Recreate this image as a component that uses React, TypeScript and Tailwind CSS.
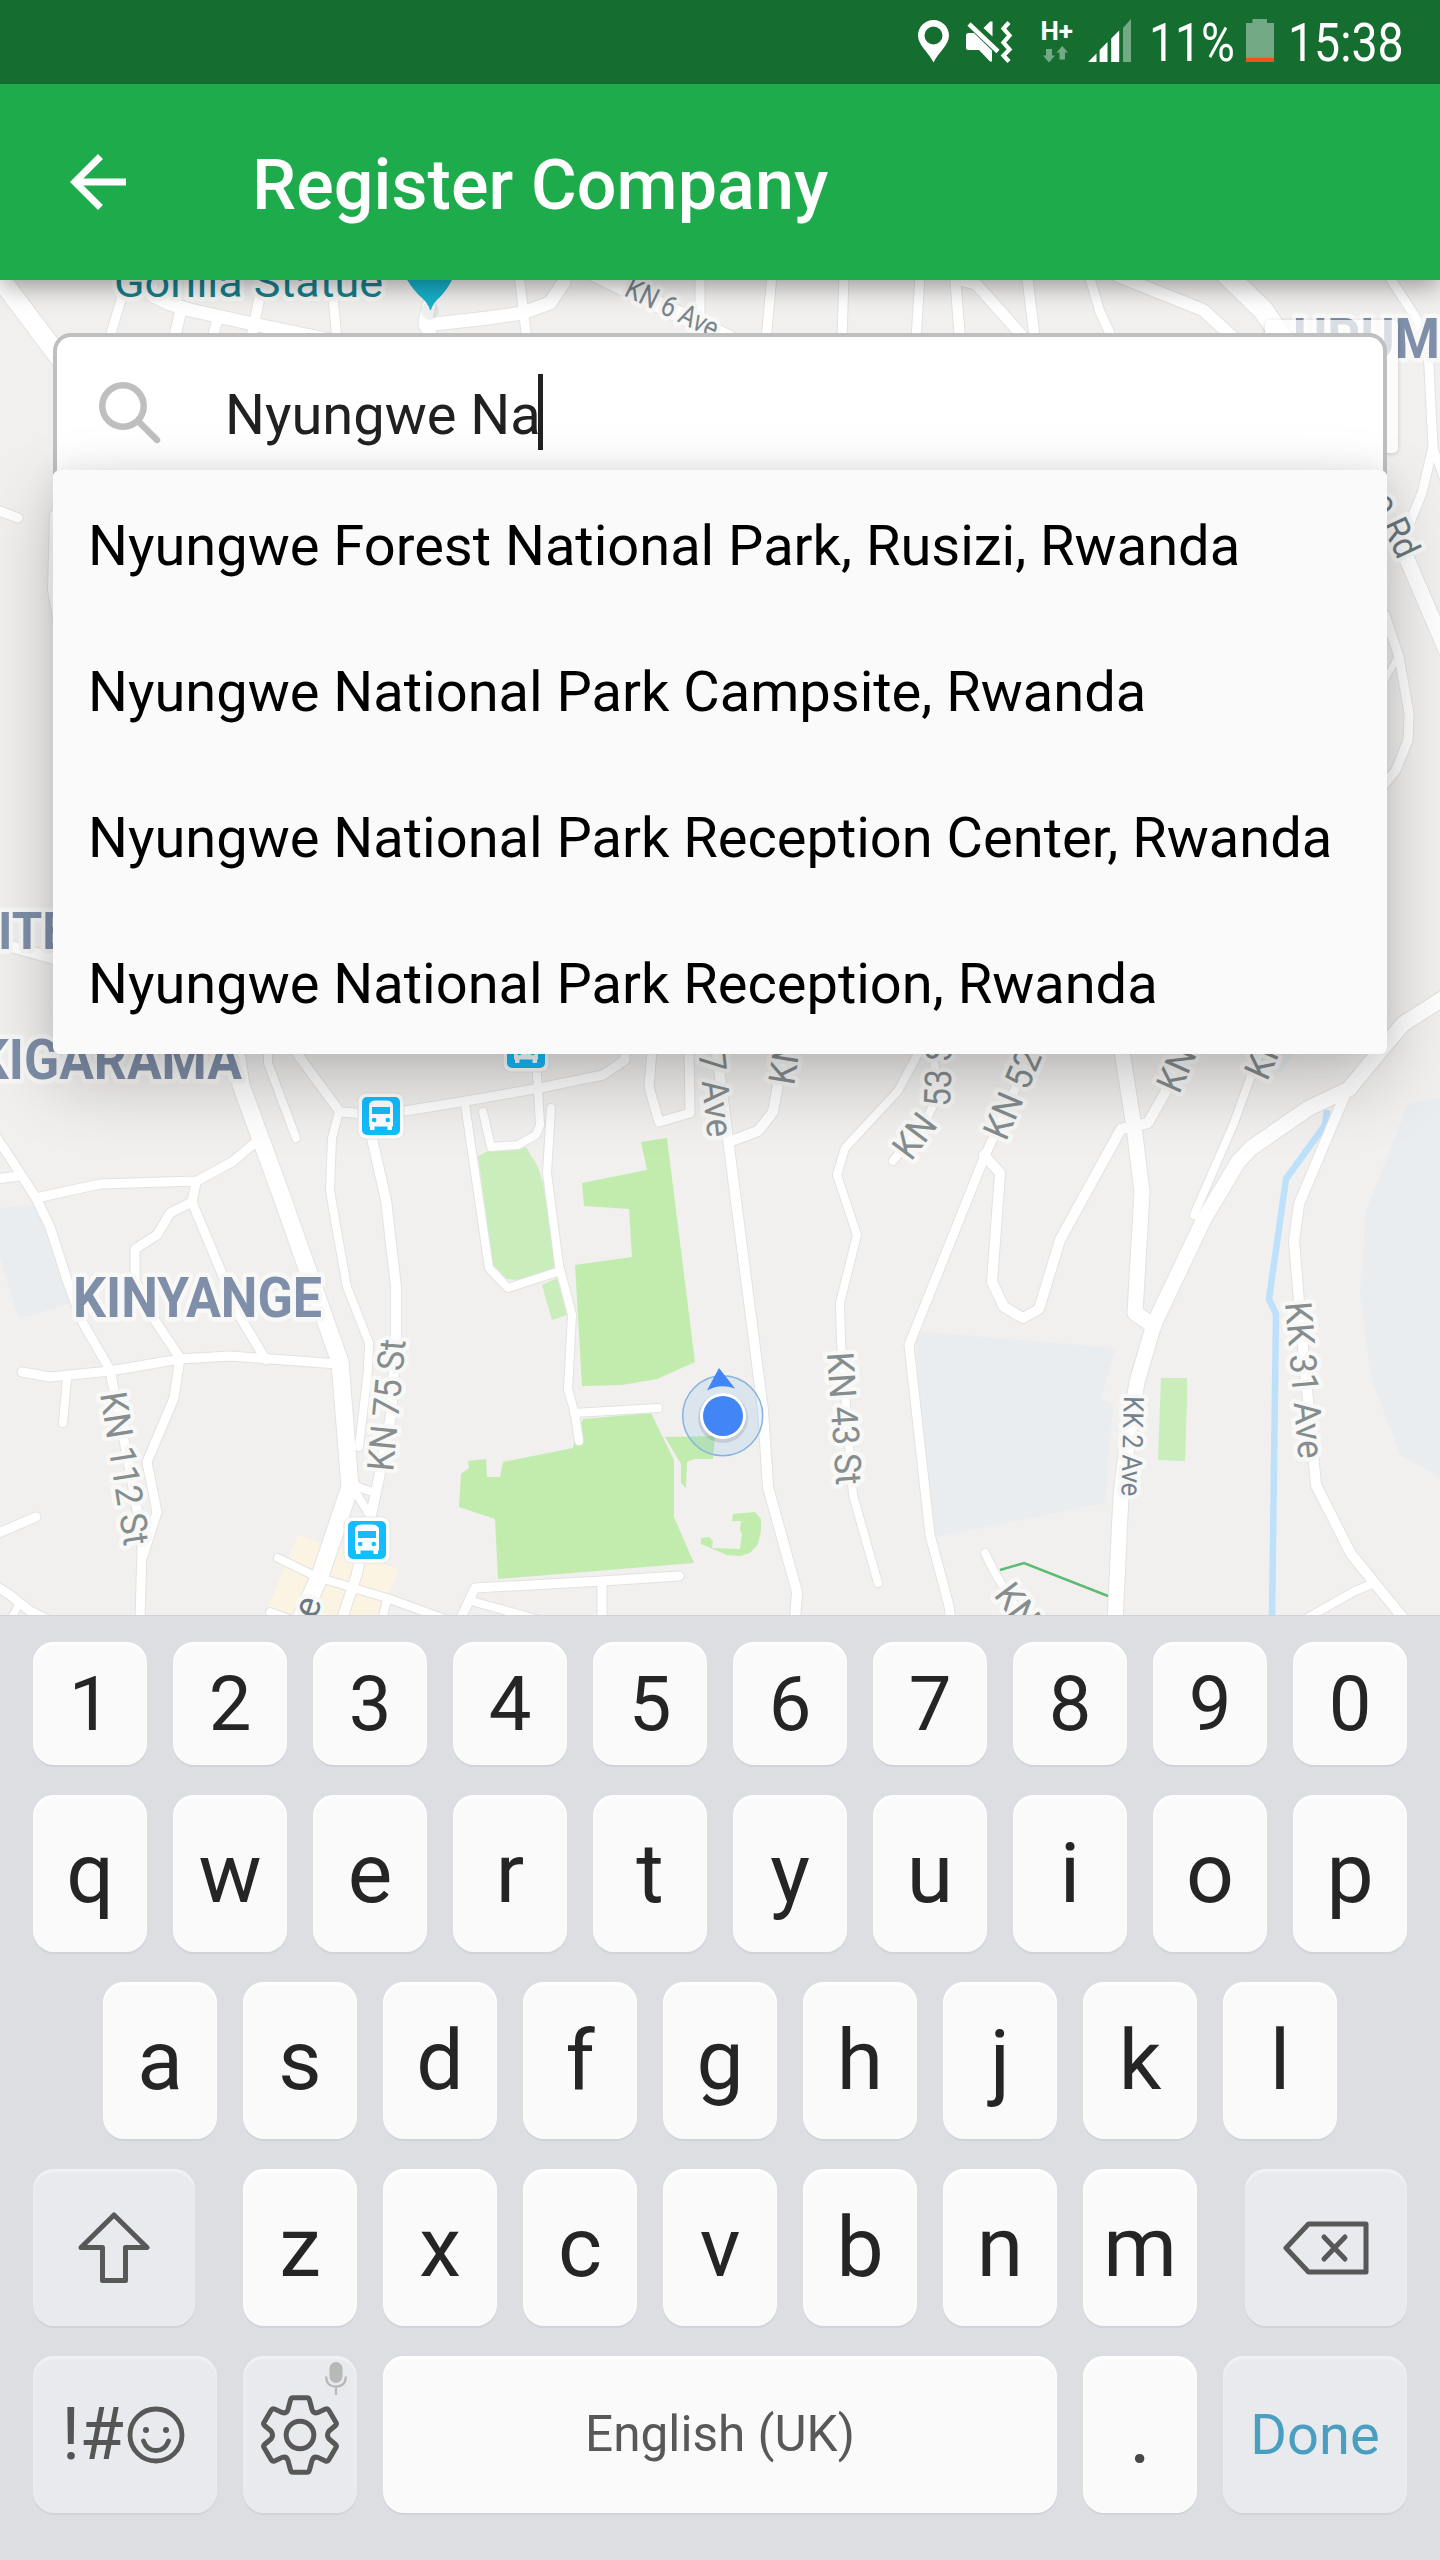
import type { ReactNode } from "react";

type Road = { d: string; w: number };

const roads: Road[] = [
  { d: "M-12 262L5 285L56 353L70 372", w: 19 },
  { d: "M127 280L109 340", w: 9 },
  { d: "M150 280L152 295L167 303L190 310L258 325L330 340", w: 13 },
  { d: "M181 310L174 340", w: 11 },
  { d: "M217 321L212 340", w: 10 },
  { d: "M264 275L251 340", w: 10 },
  { d: "M331 275L337 340", w: 9 },
  { d: "M429 305L425 322L432 340", w: 13 },
  { d: "M425 325L488 318L522 313L550 303L564 282L563 270", w: 13 },
  { d: "M519 275L527 340", w: 9 },
  { d: "M596 274L740 344", w: 16 },
  { d: "M700 275V322", w: 9 },
  { d: "M772 275L766 340", w: 9 },
  { d: "M844 275L842 340", w: 9 },
  { d: "M920 275L916 340", w: 9 },
  { d: "M955 275L960 340", w: 10 },
  { d: "M960 280L976 284L1026 340", w: 11 },
  { d: "M1027 275L1035 340", w: 10 },
  { d: "M1089 275L1100 312L1113 340", w: 9 },
  { d: "M1118 276L1203 310L1236 340", w: 12 },
  { d: "M1226 274L1263 310L1287 345", w: 20 },
  { d: "M1385 270L1416 318L1428 347L1433 447L1422 493L1404 537", w: 9 },
  { d: "M1433 447L1446 485", w: 8 },
  { d: "M1403 550L1446 650", w: 15 },
  { d: "M1385 615L1399 657L1409 713L1408 740L1396 770L1384 785", w: 9 },
  { d: "M1396 660L1385 680", w: 6 },
  { d: "M-8 508L18 518", w: 9 },
  { d: "M60 510L55 515L53 590L62 640", w: 10 },
  { d: "M-5 942L60 960", w: 11 },
  { d: "M234 1040L241 1085L260 1137L283 1200L340 1362L350 1487L321 1573L298 1625", w: 17 },
  { d: "M268 1050V1063L296 1138", w: 8 },
  { d: "M293 1048L340 1112L380 1115L466 1101L540 1088L603 1075L625 1060V1040", w: 9 },
  { d: "M339 1112L332 1138L330 1190L335 1220L347 1287L369 1343L368 1370L359 1447", w: 8 },
  { d: "M370 1130L386 1200L396 1287V1340L391 1415L380 1473L370 1520L356 1577L341 1622", w: 10 },
  { d: "M352 1482L360 1488L373 1492", w: 8 },
  { d: "M353 1488L369 1514", w: 8 },
  { d: "M-5 1135L20 1173L36 1198L50 1227L68 1283L83 1323L110 1370L126 1450L137 1510L142 1550L140 1620", w: 9 },
  { d: "M-5 1179L20 1176", w: 9 },
  { d: "M36 1198L100 1184L197 1181L232 1162L256 1142", w: 9 },
  { d: "M196 1183L192 1202L170 1213L157 1235L135 1249V1280L150 1313L180 1358L174 1398L147 1462L157 1512L143 1556", w: 9 },
  { d: "M192 1202L240 1317L266 1360", w: 9 },
  { d: "M22 1372L50 1377L110 1371L180 1359L230 1356L338 1364", w: 9 },
  { d: "M67 1378L63 1423", w: 8 },
  { d: "M-6 1535L36 1517", w: 9 },
  { d: "M-6 1585L10 1595L30 1611L52 1622", w: 9 },
  { d: "M20 1603L10 1620", w: 7 },
  { d: "M278 1558L317 1577L387 1598L445 1619", w: 8 },
  { d: "M387 1600L382 1620", w: 8 },
  { d: "M270 1612L292 1620", w: 8 },
  { d: "M465 1104L489 1268L508 1288L560 1271", w: 8 },
  { d: "M483 1112L491 1147L518 1145L536 1135L540 1125L538 1090L536 1060", w: 8 },
  { d: "M551 1108L547 1173L559 1265L572 1315L568 1389L575 1414L579 1441", w: 8 },
  { d: "M574 1413L658 1408", w: 8 },
  { d: "M652 1050L649 1087L659 1122L690 1113L689 1045", w: 9 },
  { d: "M716 1045L728 1139L763 1410L768 1487L797 1592L795 1620", w: 10 },
  { d: "M731 1141L758 1131L773 1112L778 1085L786 1045", w: 10 },
  { d: "M920 1050L898 1091L845 1148L837 1175L857 1235L840 1303L841 1341L853 1495L878 1583", w: 8 },
  { d: "M934 1050L936 1100L925 1122L893 1161", w: 8 },
  { d: "M1033 1050L984 1158L909 1345L930 1535L949 1606L951 1622", w: 9 },
  { d: "M984 1155L1000 1173L992 1282L1004 1307L1023 1318L1039 1309L1060 1240L1121 1129L1148 1123L1165 1093L1183 1045", w: 10 },
  { d: "M1121 1045L1134 1127L1142 1192L1135 1313L1154 1326", w: 15 },
  { d: "M1450 994L1403 1024L1376 1056L1349 1089L1309 1108L1251 1148L1238 1162L1204 1219L1154 1324L1137 1382L1128 1437L1121 1495L1115 1622", w: 15 },
  { d: "M1261 1048L1234 1123L1194 1215", w: 8 },
  { d: "M1347 1090L1299 1204L1294 1241L1301 1326L1316 1485L1351 1554L1408 1624", w: 10 },
  { d: "M1304 1620L1353 1592L1372 1584", w: 8 },
  { d: "M602 1584V1620", w: 9 },
  { d: "M460 1620L475 1588L602 1581L679 1576", w: 9 },
  { d: "M475 1602L536 1619", w: 8 },
  { d: "M985 1553L995 1573L1022 1618", w: 8 },
];

type Label = {
  t: string;
  x: number;
  y: number;
  r?: number;
  size?: number;
  len?: number;
  fill?: string;
  bold?: boolean;
};

const labels: Label[] = [
  { t: "Gorilla Statue", x: 114, y: 297, size: 43, len: 269, fill: "#15808c" },
  { t: "KN 6 Ave", x: 623, y: 295, r: 26, size: 29, len: 100, fill: "#7b858c" },
  { t: "o Rd", x: 1370, y: 500, r: 65, size: 36, len: 67, fill: "#6b7880" },
  { t: "URUM", x: 1293, y: 358, size: 55, len: 147, bold: true },
  { t: "ITE", x: -2, y: 949, size: 52, len: 72, bold: true },
  { t: "KIGARAMA", x: -24, y: 1079, size: 55, len: 266, bold: true },
  { t: "KINYANGE", x: 73, y: 1317, size: 55, len: 249, bold: true },
  { t: "KN 112 St", x: 100, y: 1394, r: 81, len: 155 },
  { t: "KN 75 St", x: 393, y: 1472, r: -84.5, len: 132 },
  { t: "KN 43 St", x: 827, y: 1353, r: 86, len: 133 },
  { t: "KN 7 Ave", x: 693, y: 998, r: 84, len: 141 },
  { t: "KN 51 St", x: 794, y: 1086, r: -81, len: 132 },
  { t: "KN", x: 911, y: 1162, r: -53, len: 46 },
  { t: "53 St", x: 950, y: 1107, r: -88, len: 76 },
  { t: "KN 52 St", x: 1006, y: 1142, r: -67, len: 134 },
  { t: "KN 50", x: 1179, y: 1095, r: -66, len: 91 },
  { t: "KN 48", x: 1267, y: 1082, r: -66, len: 93 },
  { t: "KK 2 Ave", x: 1124, y: 1396, r: 91.5, size: 28, len: 100, fill: "#74828e" },
  { t: "KK 31 Ave", x: 1285, y: 1303, r: 85, len: 157 },
  { t: "KN 5", x: 993, y: 1595, r: 53, len: 75 },
  { t: "e", x: 316, y: 1620, r: -72, fill: "#6b7880" },
];

function BusStop({ x, y }: { x: number; y: number }) {
  return (
    <g transform={`translate(${x} ${y})`}>
      <rect x={-4} y={-4} width={46} height={46} rx={8} fill="#fff" stroke="#e6e6e5" strokeWidth={1} />
      <rect width={38} height={38} rx={5} fill="#13bdff" />
      <path d="M7 9Q7 3.5 14 3.5H24Q31 3.5 31 9V29.5H30V33H25.500V29.5H12.500V33H8V29.500H7Z" fill="#fff" />
      <rect x={10} y={10} width={18} height={7} fill="#13bdff" />
      <circle cx={12.200} cy={23} r={2.300} fill="#13bdff" />
      <circle cx={25.800} cy={23} r={2.300} fill="#13bdff" />
    </g>
  );
}

function CityMap() {
  return (
    <svg viewBox="0 280 1440 1335" className="block h-full w-full" aria-hidden="true">
      <rect y={280} width={1440} height={1335} fill="#f1f0ef" />
      <g fill="#e9edf0">
        <path d="M915 1331L1116 1348L1101 1398L1113 1404L1105 1503L930 1538Z" />
        <path d="M1408 1104L1440 1097V1477L1401 1456L1371 1378L1360 1294L1366 1211Z" />
        <path d="M0 1208L32 1205L50 1227L68 1283L70 1303L30 1316H18L0 1257Z" />
        <path d="M1260 1054H1294L1282 1072L1255 1066Z" />
      </g>
      <path d="M298 1535L399 1569L388 1597L378 1615H265Z" fill="#fcf4e3" />
      <g fill="#c9eebb">
        <path d="M478 1156L488 1151L518 1150L526 1147L538 1167L543 1183L555 1265L548 1273L517 1280L507 1279L493 1265Z" />
        <path d="M542 1285L557 1278L567 1315L552 1320Z" />
        <path d="M1161 1378H1187V1402L1185 1461L1158 1460Z" />
      </g>
      <g fill="#c1ecae">
        <path d="M641 1142L667 1138L695 1362L657 1379L622 1385L582 1386L575 1265L632 1257L629 1209L584 1206L582 1183L647 1170Z" />
        <path d="M583 1419L651 1413L674 1460V1517L694 1563L498 1579L495 1519L459 1507L461 1474L469 1468L468 1461L486 1459L487 1477H500L503 1462L573 1448L574 1443Z" />
        <path d="M665 1437L715 1436L713 1459H695L687 1462L686 1488L681 1483V1464Z" />
        <path d="M733 1514L755 1512L761 1519V1531L758 1544L750 1553L740 1556L727 1555L701 1544V1538L709 1537L713 1541L712 1548L740 1549L742 1534L740 1529L741 1521H732Z" />
      </g>
      <path d="M1327 1110L1325 1125L1286 1179L1269 1299L1276 1314L1272 1620" fill="none" stroke="#bde0fb" strokeWidth={6.500} strokeLinejoin="round" />
      <g fill="none" stroke="#e3e2e1" strokeLinecap="round" strokeLinejoin="round">
        {roads.map((r) => (
          <path key={r.d} d={r.d} strokeWidth={r.w + 2} />
        ))}
      </g>
      <g fill="none" stroke="#fff" strokeLinecap="round" strokeLinejoin="round">
        {roads.map((r) => (
          <path key={r.d} d={r.d} strokeWidth={r.w} />
        ))}
      </g>
      <path d="M1000 1570L1024 1563L1108 1596" fill="none" stroke="#5dbb73" strokeWidth={2.500} />
      <g fontFamily="Roboto" strokeLinejoin="round">
        {labels.map((l) => (
          <text
            key={`${l.t}-${l.x}`}
            transform={`translate(${l.x} ${l.y}) rotate(${l.r ?? 0})`}
            fontSize={l.size ?? 37}
            fontWeight={l.bold ? 700 : 400}
            textLength={l.len}
            lengthAdjust="spacingAndGlyphs"
            fill={l.fill ?? (l.bold ? "#7f8fa9" : "#868d8f")}
            stroke="#f8f8f7"
            strokeWidth={9}
            paintOrder="stroke"
          >
            {l.t}
          </text>
        ))}
      </g>
      <circle cx={430} cy={311} r={9} fill="#000" opacity={0.06} />
      <path d="M406 278H453Q447 290 440 297Q433 303 431 310H430Q428 303 421 297Q413 290 406 278Z" fill="#17b2cb" />
      <BusStop x={362} y={1097} />
      <BusStop x={348} y={1521} />
      <BusStop x={507} y={1030} />
      <circle cx={722.700} cy={1415.700} r={40} fill="#4a9ae8" fillOpacity={0.13} stroke="#86b3e0" strokeWidth={1.500} />
      <path d="M719 1368L735 1388.500Q720 1383 707 1390.500Z" fill="#4285f4" />
      <circle cx={723} cy={1418} r={25} fill="#000" opacity={0.1} />
      <circle cx={723} cy={1416} r={23} fill="#fff" />
      <circle cx={723} cy={1416} r={20} fill="#4285f4" />
    </svg>
  );
}

function StatusBar() {
  return (
    <div className="relative z-20 flex h-[84px] items-start bg-[#156e30] text-white">
      <svg viewBox="910 0 230 84" className="ml-[910px] h-[84px] w-[230px] shrink-0" fill="#fff">
        <path fillRule="evenodd" d="M933.500 20C942 20 949 27 949 35.500C949 45 938 53 933.500 62.500C929 53 918 45 918 35.500C918 27 925 20 933.500 20ZM933.500 26.500A9 9 0 1 0 933.500 44.500A9 9 0 1 0 933.500 26.500Z" />
        <path d="M968 33H974L992 50.500V61.500H990L979 50H968Q966 50 966 48V35.500Q966 33 968 33ZM983.500 28L990 21.500H992.500V36.500Z" />
        <path d="M969 24L998 51.500" stroke="#fff" strokeWidth={4.500} fill="none" />
        <path d="M1009 22.500L1003.500 28.500L1009.500 35.500L1003.500 42.500L1009.500 49.500L1003.500 55.500L1009 61.500" stroke="#fff" strokeWidth={4.200} fill="none" />
        <text x={1040.500} y={40} fontFamily="Roboto" fontSize={25.500} fontWeight={700} textLength={32.500} lengthAdjust="spacingAndGlyphs">H+</text>
        <g fill="#73a985">
          <path d="M1046 49H1052V55.500H1055L1049 62.500L1043 55.500H1046ZM1059.500 59.500H1065V52.500H1068L1062.300 46L1056.500 52.500H1059.500Z" />
          <path d="M1123 62V28L1131 19V62Z" />
        </g>
        <path d="M1088 62L1096.500 53.500V62ZM1099.600 62V50L1107.500 42V62ZM1111.200 62V38.500L1119.200 30.500V62Z" />
      </svg>
      <span className="ml-[9px] mt-[11px] w-[97px] origin-left scale-x-[0.855] whitespace-nowrap text-[54px] leading-[64px]">11%</span>
      <svg viewBox="0 0 28 84" className="h-[84px] w-7 shrink-0">
        <path d="M6.500 19H21V23H28V62H0V23H6.500Z" fill="#73a985" />
        <path d="M0 57.700H28V62H0Z" fill="#f4511e" />
      </svg>
      <span className="ml-[14px] mt-[11px] origin-left scale-x-[0.86] whitespace-nowrap text-[54px] leading-[64px]">15:38</span>
    </div>
  );
}

function AppBar() {
  return (
    <header className="relative z-10 flex h-[196px] items-center bg-[#1eab4b] pl-14 text-white shadow-[0_6px_24px_rgba(0,0,0,0.38)]">
      <svg viewBox="0 0 24 24" className="size-[84px]" fill="#fff">
        <path d="M20 11H7.830l5.590-5.590L12 4l-8 8 8 8 1.410-1.410L7.830 13H20v-2z" />
      </svg>
      <h1 className="ml-[112px] mt-[6px] text-[70px] font-medium leading-none tracking-[0.1px]">Register Company</h1>
    </header>
  );
}

const suggestions = [
  "Nyungwe Forest National Park, Rusizi, Rwanda",
  "Nyungwe National Park Campsite, Rwanda",
  "Nyungwe National Park Reception Center, Rwanda",
  "Nyungwe National Park Reception, Rwanda",
];

function SearchPanel() {
  return (
    <div className="absolute inset-x-[53px] top-[53px]">
      <div className="flex h-[141px] items-start rounded-t-[18px] border-4 border-b-0 border-[#bfbfbf] bg-white pl-[42px]">
        <svg viewBox="0 0 62 62" className="mt-[45px] size-[62px]" fill="none" stroke="#bfbfbf" strokeWidth={6.500}>
          <circle cx={24} cy={24} r={20.700} />
          <path d="M39 39L58 58" strokeLinecap="round" />
        </svg>
        <span className="ml-16 mt-[45px] text-[56px] leading-[66px] text-[#212121]">Nyungwe Na</span>
        <span className="-ml-[3px] mt-[37px] h-[76px] w-[5px] bg-[#212121]" />
      </div>
      <ul className="relative -mt-1 rounded-[7px] bg-[#fafafa] shadow-[0_28px_72px_rgba(0,0,0,0.22),0_0_30px_rgba(0,0,0,0.08)]">
        {suggestions.map((s) => (
          <li key={s} className="flex h-[146px] items-center whitespace-nowrap pl-[35px] pt-[6px] text-[56px] leading-[66px] text-black">
            {s}
          </li>
        ))}
      </ul>
    </div>
  );
}

function Key({ children, className = "w-[114px]", special = false }: { children: ReactNode; className?: string; special?: boolean }) {
  const tone = special
    ? "bg-[#e9eaee] shadow-[inset_0_3px_2px_#f1f2f5,0_2px_0_#d2d3d8]"
    : "bg-[#fafafa] shadow-[inset_0_3px_2px_#ffffff,0_2px_0_#d2d3d8]";
  return (
    <div className={`relative flex h-full shrink-0 items-center justify-center rounded-[21px] ${tone} ${className}`}>{children}</div>
  );
}

function LetterRow({ letters }: { letters: string }) {
  return (
    <>
      {letters.split("").map((c) => (
        <Key key={c}>{c}</Key>
      ))}
    </>
  );
}

function Keyboard() {
  return (
    <div className="relative z-10 flex h-[945px] flex-col gap-[30px] border-t border-[#d2d3d7] bg-[#dddee2] px-[33px] pt-[26px] text-[84px] leading-none text-[#252525]">
      <div className="flex h-[123px] justify-between text-[76px]">
        <LetterRow letters="1234567890" />
      </div>
      <div className="flex h-[157px] justify-between">
        <LetterRow letters="qwertyuiop" />
      </div>
      <div className="flex h-[157px] justify-between px-[70px]">
        <LetterRow letters="asdfghjkl" />
      </div>
      <div className="flex h-[157px] justify-between">
        <Key special className="w-[162px]">
          <svg viewBox="0 0 72 72" className="size-[72px]" fill="none" stroke="#585858" strokeWidth={5} strokeLinejoin="round">
            <path d="M36 3L69 35.500H47.500V68.500H24.500V35.500H3Z" />
          </svg>
        </Key>
        <div className="flex w-[954px] justify-between">
          <LetterRow letters="zxcvbnm" />
        </div>
        <Key special className="w-[162px]">
          <svg viewBox="0 0 86 54" className="h-[54px] w-[86px]" fill="none" stroke="#585858" strokeWidth={5} strokeLinejoin="round" strokeLinecap="round">
            <path d="M3 27L25.500 3H83V51H25.500Z" />
            <path d="M41 16L62 38M62 16L41 38" />
          </svg>
        </Key>
      </div>
      <div className="flex h-[157px] justify-between">
        <Key special className="w-[184px]">
          <span className="-ml-1 w-[65px] whitespace-nowrap text-[72px] tracking-[-0.5px] text-[#555555]">!#</span>
          <svg viewBox="0 0 58 58" className="size-[58px] shrink-0" fill="none" stroke="#585858" strokeWidth={4.800} strokeLinecap="round">
            <circle cx={29} cy={29} r={26} />
            <path d="M16.500 35Q20 44.500 29 44.500Q38 44.500 41.500 35" />
            <circle cx={19} cy={24} r={3} fill="#585858" stroke="none" />
            <circle cx={39} cy={24} r={3} fill="#585858" stroke="none" />
          </svg>
        </Key>
        <Key special>
          <svg viewBox="-41 -41 82 82" className="size-[82px]" fill="none" stroke="#585858" strokeWidth={5} strokeLinejoin="round">
            <path d="M-7 -37.300H7Q9 -37.300 9.500 -35L12 -25.500Q13.500 -21 18 -22.500L25.500 -26Q27.500 -27 29 -24.500L36 -12.500Q37 -11 35.500 -9.500L29 -4Q26 0 29 4L35.500 9.500Q37 11 36 12.500L29 24.500Q27.500 27 25.500 26L18 22.500Q13.500 21 12 25.500L9.500 35Q9 37.300 7 37.300H-7Q-9 37.300 -9.500 35L-12 25.500Q-13.500 21 -18 22.500L-25.500 26Q-27.500 27 -29 24.500L-36 12.500Q-37 11 -35.500 9.500L-29 4Q-26 0 -29 -4L-35.500 -9.500Q-37 -11 -36 -12.500L-29 -24.500Q-27.500 -27 -25.500 -26L-18 -22.500Q-13.500 -21 -12 -25.500L-9.500 -35Q-9 -37.300 -7 -37.300Z" />
            <circle r={13.800} />
          </svg>
          <svg viewBox="0 0 22 33" className="absolute right-[10px] top-[6px] h-[33px] w-[22px]" fill="none" stroke="#b8b8b8" strokeWidth={2.200}>
            <rect x={4.500} y={0} width={13} height={21} rx={6.500} fill="#b8b8b8" stroke="none" />
            <path d="M1.200 14.500Q1.200 24.500 11 24.500Q20.800 24.500 20.800 14.500M11 24.500V33" />
          </svg>
        </Key>
        <Key className="w-[674px] text-[49.5px] text-[#585858]">English (UK)</Key>
        <Key>
          <span className="text-[#484848]">.</span>
        </Key>
        <Key special className="w-[184px] text-[56px] text-[#4a9fc0]">Done</Key>
      </div>
    </div>
  );
}

export default function App() {
  return (
    <div className="h-[2560px] w-[1440px] overflow-hidden font-['Roboto',sans-serif]">
      <StatusBar />
      <AppBar />
      <main className="relative h-[1335px] overflow-hidden">
        <CityMap />
        <div className="absolute left-[1265px] top-10 h-[133px] w-[133px] rounded-[5px] bg-white/70 shadow-[0_1px_4px_rgba(0,0,0,0.18)]" />
        <SearchPanel />
      </main>
      <Keyboard />
    </div>
  );
}
